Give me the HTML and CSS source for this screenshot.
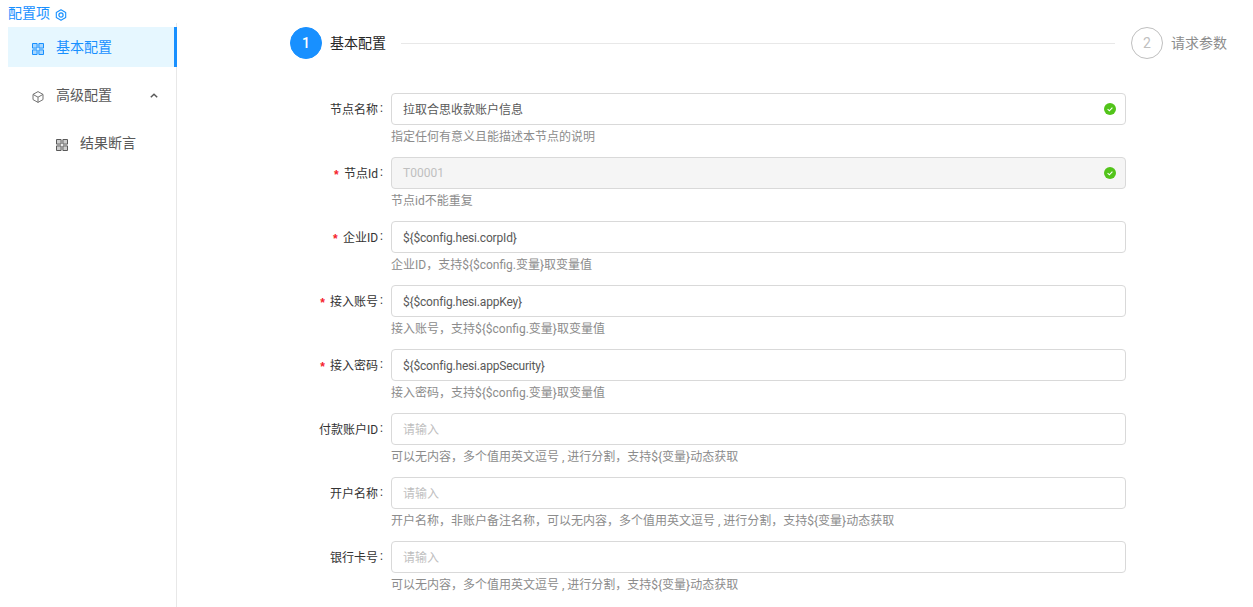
FILE: index.html
```html
<!DOCTYPE html>
<html lang="zh">
<head>
<meta charset="utf-8">
<title>配置项</title>
<link rel="stylesheet" href="styles.css">
</head>
<body>
<svg class="defs" width="0" height="0">
  <symbol id="grid" viewBox="0 0 12 12"><path d="M.5.5h4.6v4.6H.5zM6.9.5h4.6v4.6H6.9zM.5 6.9h4.6v4.6H.5zM6.9 6.9h4.6v4.6H6.9z" fill="currentColor" fill-opacity=".3" stroke="currentColor" stroke-width="1"/></symbol>
  <symbol id="ok" viewBox="0 0 12 12"><circle cx="6" cy="6" r="6" fill="#52c41a"/><path d="M3.6 6.1l1.8 1.7 3-3.2" fill="none" stroke="#fff" stroke-width="1.1"/></symbol>
</svg>
<div class="page">
  <aside class="side">
    <div class="side-title">配置项
      <svg class="target" viewBox="0 0 12 12"><path d="M6 .7l4.7 2.7v5.2L6 11.3 1.3 8.6V3.4z" fill="none" stroke="currentColor" stroke-width="1.1" stroke-linejoin="round"/><circle cx="6" cy="6" r="2.1" fill="none" stroke="currentColor" stroke-width="1.2"/></svg>
    </div>
    <nav class="menu">
      <a class="item active"><svg class="ico"><use href="#grid"/></svg>基本配置</a>
      <a class="item"><svg class="ico cube" viewBox="0 0 12 12"><path d="M6 .6l5 2.8v5.2l-5 2.8-5-2.8V3.4zM1 3.4L6 6.2l5-2.8M6 6.2v5.2" fill="none" stroke="currentColor" stroke-linejoin="round"/></svg>高级配置
        <svg class="caret" viewBox="0 0 8 5"><path d="M.8 4.2L4 1.2l3.2 3" fill="none" stroke="currentColor" stroke-width="1.5"/></svg></a>
      <a class="item sub"><svg class="ico"><use href="#grid"/></svg>结果断言</a>
    </nav>
  </aside>
  <main class="main">
    <div class="steps">
      <span class="num on">1</span><span class="step-name">基本配置</span><span class="line"></span>
      <span class="num">2</span><span class="step-name off">请求参数</span>
    </div>
    <form class="form">
      <div class="row"><label class="lab">节点名称</label><div class="ctl"><div class="input cn"><span>拉取合思收款账户信息</span><svg class="ok"><use href="#ok"/></svg></div><p class="help">指定任何有意义且能描述本节点的说明</p></div></div>
      <div class="row"><label class="lab"><i>*</i>节点Id</label><div class="ctl"><div class="input dis"><span>T00001</span><svg class="ok"><use href="#ok"/></svg></div><p class="help">节点id不能重复</p></div></div>
      <div class="row"><label class="lab"><i>*</i>企业ID</label><div class="ctl"><div class="input code"><span>${$config.hesi.corpId}</span></div><p class="help">企业ID，支持${$config.变量}取变量值</p></div></div>
      <div class="row"><label class="lab"><i>*</i>接入账号</label><div class="ctl"><div class="input code"><span>${$config.hesi.appKey}</span></div><p class="help">接入账号，支持${$config.变量}取变量值</p></div></div>
      <div class="row"><label class="lab"><i>*</i>接入密码</label><div class="ctl"><div class="input code"><span>${$config.hesi.appSecurity}</span></div><p class="help">接入密码，支持${$config.变量}取变量值</p></div></div>
      <div class="row"><label class="lab">付款账户ID</label><div class="ctl"><div class="input cn ph"><span>请输入</span></div><p class="help">可以无内容，多个值用英文逗号 , 进行分割，支持${变量}动态获取</p></div></div>
      <div class="row"><label class="lab">开户名称</label><div class="ctl"><div class="input cn ph"><span>请输入</span></div><p class="help">开户名称，非账户备注名称，可以无内容，多个值用英文逗号 , 进行分割，支持${变量}动态获取</p></div></div>
      <div class="row"><label class="lab">银行卡号</label><div class="ctl"><div class="input cn ph"><span>请输入</span></div><p class="help">可以无内容，多个值用英文逗号 , 进行分割，支持${变量}动态获取</p></div></div>
    </form>
  </main>
</div>
</body>
</html>
```
FILE: styles.css
```css
* { box-sizing: border-box; }
html, body { margin: 0; height: 100%; overflow: hidden; background: #fff; }
body { font-family: Roboto, "Noto Sans CJK SC", sans-serif; font-size: 12px; color: #333; }
.defs { position: absolute; }
.page { display: flex; height: 607px; }
.side { width: 177px; flex: none; display: flex; flex-direction: column; }
.side-title { height: 27px; padding: 4px 0 0 8px; color: #1890ff; font-size: 14px; line-height: 18px; display: flex; align-items: flex-start; gap: 5px; }
.target { width: 12px; height: 12px; margin-top: 5px; }
.menu { flex: 1; margin-left: 8px; border-right: 1px solid #e8e8e8; margin-top: -4px; padding-top: 4px; display: flex; flex-direction: column; gap: 8px; }
.item { height: 40px; display: flex; align-items: center; padding-left: 24px; padding-bottom: 2px; font-size: 14px; color: #595959; position: relative; margin-right: -1px; }
.item.active { background: #e6f7ff; color: #1890ff; border-right: 3px solid #1890ff; }
.item.sub { padding-left: 48px; }
.ico { width: 12px; height: 12px; margin: 6px 12px 0 0; flex: none; }
.cube { color: #737373; }
.caret { width: 8px; height: 5px; position: absolute; right: 19px; top: 18px; }
.main { flex: 1; min-width: 0; padding: 27px 26px 0 113px; }
.steps { display: flex; align-items: center; height: 32px; }
.num { width: 32px; height: 32px; border-radius: 50%; border: 1px solid #bfbfbf; color: #bfbfbf; font-size: 14px; display: flex; align-items: center; justify-content: center; flex: none; }
.num.on { background: #1890ff; border-color: #1890ff; color: #fff; font-weight: 500; }
.step-name { font-size: 14px; color: #262626; margin: 0 0 2px 8px; white-space: nowrap; }
.step-name.off { color: #8c8c8c; }
.line { flex: 1; height: 1px; background: #e8e8e8; margin: 0 16px 0 15px; }
.form { margin-top: 34px; }
.row { display: flex; height: 64px; }
.lab { width: 101px; flex: none; height: 32px; padding-bottom: 2px; display: flex; align-items: center; justify-content: flex-end; color: #333; white-space: nowrap; }
.lab::after { content: ":"; margin: 0 8px 0 2px; }
.lab i { color: #f5222d; font-style: normal; font-weight: 700; font-family: "Liberation Mono", monospace; margin: 7px 4px 0 0; }
.ctl { flex: 0 0 735px; }
.input { height: 32px; border: 1px solid #d9d9d9; border-radius: 4px; padding: 0 11px; display: flex; align-items: center; justify-content: space-between; color: #595959; }
.input.cn { padding-bottom: 2px; }
.input.code { padding-top: 2px; letter-spacing: -.18px; }
.input.dis { background: #f5f5f5; color: #bfbfbf; }
.input.ph { color: #bfbfbf; }
.ok { width: 12px; height: 12px; margin-right: -2px; flex: none; }
.input.cn .ok { margin-top: 2px; }
.help { margin: 3px 0 0; line-height: 18px; color: #8c8c8c; white-space: nowrap; }
```
